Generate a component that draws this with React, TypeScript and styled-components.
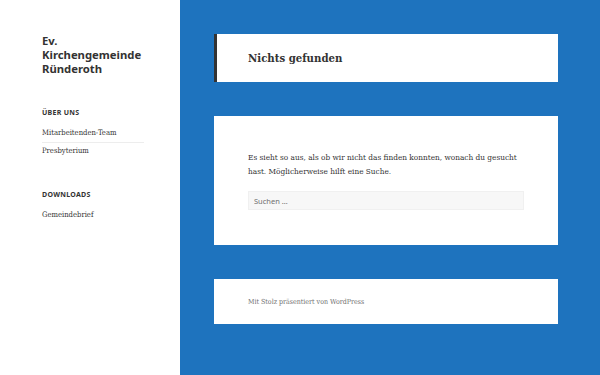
import React from 'react';
import styled, { createGlobalStyle } from 'styled-components';

const GlobalStyle = createGlobalStyle`
  html, body {
    margin: 0;
    padding: 0;
    background: #1e73be;
  }
  * {
    box-sizing: border-box;
  }
`;

const serif = `'DejaVu Serif Condensed', 'DejaVu Serif', serif`;

const Page = styled.div`
  display: flex;
  width: 600px;
  height: 375px;
  overflow: hidden;
  background: #1e73be;
`;

const Sidebar = styled.aside`
  width: 180px;
  flex-shrink: 0;
  background: #fff;
  padding: 34px 36px 0 42px;
`;

const SiteTitle = styled.h1`
  margin: 0;
  font-family: 'Noto Sans', sans-serif;
  font-size: 11.3px;
  line-height: 14px;
  font-weight: 700;
  color: #333;
`;

const Widget = styled.section`
  margin-top: 32px;
`;

const WidgetTitle = styled.h2`
  margin: 0 0 8px;
  font-family: 'Noto Sans', sans-serif;
  font-size: 7px;
  line-height: 10px;
  font-weight: 700;
  letter-spacing: 0.04em;
  text-transform: uppercase;
  color: #333;
`;

const LinkList = styled.ul`
  list-style: none;
  margin: 0;
  padding: 0;
`;

const LinkItem = styled.li<{ divided?: boolean }>`
  font-family: ${serif};
  font-size: 7.6px;
  line-height: 14px;
  color: #333;
  padding-bottom: ${(p) => (p.divided ? '2px' : '0')};
  margin-bottom: ${(p) => (p.divided ? '1px' : '0')};
  border-bottom: ${(p) => (p.divided ? '1px solid #ededed' : 'none')};
`;

const Main = styled.main`
  flex: 1;
  padding: 34px 42px 0 34px;
  display: flex;
  flex-direction: column;
  gap: 34px;
`;

const Card = styled.div<{ accent?: boolean }>`
  background: #fff;
  padding: 0 34px 0 ${(p) => (p.accent ? '31px' : '34px')};
  border-left: ${(p) => (p.accent ? '3px solid #333' : 'none')};
`;

const PageTitle = styled.h1`
  margin: 0;
  height: 48px;
  display: flex;
  align-items: center;
  font-family: ${serif};
  font-size: 11.3px;
  font-weight: 700;
  color: #333;
`;

const Body = styled.div`
  padding: 34px 0 35px;
`;

const Text = styled.p`
  margin: 0 0 13px;
  font-family: ${serif};
  font-size: 8.2px;
  line-height: 14px;
  color: #333;
`;

const SearchField = styled.input`
  display: block;
  width: 276px;
  height: 19px;
  margin: 0;
  padding: 0 5px;
  border: 1px solid #f0f0f0;
  background: #f7f7f7;
  font-family: 'Noto Sans', sans-serif;
  font-size: 7.5px;
  color: #333;
  outline: none;

  &::placeholder {
    color: #707070;
  }
`;

const Footer = styled.footer`
  height: 45px;
  display: flex;
  align-items: center;
  font-family: ${serif};
  font-size: 7px;
  color: #707070;
`;

export default function App() {
  return (
    <>
      <GlobalStyle />
      <Page>
        <Sidebar>
          <SiteTitle>
            Ev.
            <br />
            Kirchengemeinde
            <br />
            Ründeroth
          </SiteTitle>
          <Widget>
            <WidgetTitle>Über uns</WidgetTitle>
            <LinkList>
              <LinkItem divided>Mitarbeitenden-Team</LinkItem>
              <LinkItem>Presbyterium</LinkItem>
            </LinkList>
          </Widget>
          <Widget>
            <WidgetTitle>Downloads</WidgetTitle>
            <LinkList>
              <LinkItem>Gemeindebrief</LinkItem>
            </LinkList>
          </Widget>
        </Sidebar>
        <Main>
          <Card accent>
            <PageTitle>Nichts gefunden</PageTitle>
          </Card>
          <Card>
            <Body>
              <Text>
                Es sieht so aus, als ob wir nicht das finden konnten, wonach du gesucht
                hast. Möglicherweise hilft eine Suche.
              </Text>
              <SearchField type="search" placeholder="Suchen …" />
            </Body>
          </Card>
          <Card>
            <Footer>Mit Stolz präsentiert von WordPress</Footer>
          </Card>
        </Main>
      </Page>
    </>
  );
}
